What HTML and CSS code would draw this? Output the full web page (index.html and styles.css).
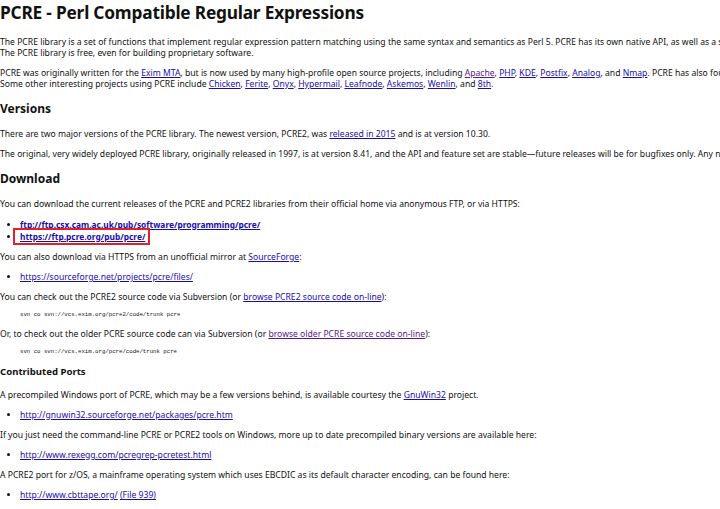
FILE: index.html
```html
<!DOCTYPE html>
<html lang="en">
<head>
  <meta charset="UTF-8" />
  <title>PCRE - Perl Compatible Regular Expressions</title>
  <link rel="stylesheet" href="styles.css">
</head>
<body>

<h1>PCRE - Perl Compatible Regular Expressions</h1>

<p>The PCRE library is a set of functions that implement regular expression pattern matching using the same syntax and semantics as Perl 5. PCRE has its own native API, as well as a set of wrapper functions that correspond to the POSIX regular expression API.<br>
The PCRE library is free, even for building proprietary software.</p>

<p>PCRE was originally written for the <a href="#">Exim MTA</a>, but is now used by many high-profile open source projects, including <a class="seen" href="#">Apache</a>, <a href="#">PHP</a>, <a href="#">KDE</a>, <a href="#">Postfix</a>, <a href="#">Analog</a>, and <a href="#">Nmap</a>. PCRE has also found its way into some well known commercial products, like Apple Safari.<br>
Some other interesting projects using PCRE include <a href="#">Chicken</a>, <a href="#">Ferite</a>, <a href="#">Onyx</a>, <a href="#">Hypermail</a>, <a href="#">Leafnode</a>, <a href="#">Askemos</a>, <a href="#">Wenlin</a>, and <a href="#">8th</a>.</p>

<h2>Versions</h2>

<p>There are two major versions of the PCRE library. The newest version, PCRE2, was <a href="#">released in 2015</a> and is at version 10.30.</p>

<p>The original, very widely deployed PCRE library, originally released in 1997, is at version 8.41, and the API and feature set are stable&mdash;future releases will be for bugfixes only. Any new features will be added to PCRE2, not to the original PCRE library.</p>

<h2>Download</h2>

<p>You can download the current releases of the PCRE and PCRE2 libraries from their official home via anonymous FTP, or via HTTPS:</p>

<ul class="mirrors">
  <li><a href="#">ftp://ftp.csx.cam.ac.uk/pub/software/programming/pcre/</a></li>
  <li><span class="mark"><a href="#">https://ftp.pcre.org/pub/pcre/</a></span></li>
</ul>

<p>You can also download via HTTPS from an unofficial mirror at <a href="#">SourceForge</a>:</p>

<ul>
  <li><a href="#">https://sourceforge.net/projects/pcre/files/</a></li>
</ul>

<p class="intro">You can check out the PCRE2 source code via Subversion (or <a href="#">browse PCRE2 source code on-line</a>):</p>

<pre>svn co svn://vcs.exim.org/pcre2/code/trunk pcre</pre>

<p class="intro">Or, to check out the older PCRE source code can via Subversion (or <a class="seen" href="#">browse older PCRE source code on-line</a>):</p>

<pre>svn co svn://vcs.exim.org/pcre/code/trunk pcre</pre>

<h3>Contributed Ports</h3>

<p>A precompiled Windows port of PCRE, which may be a few versions behind, is available courtesy the <a href="#">GnuWin32</a> project.</p>

<ul>
  <li><a href="#">http://gnuwin32.sourceforge.net/packages/pcre.htm</a></li>
</ul>

<p>If you just need the command-line PCRE or PCRE2 tools on Windows, more up to date precompiled binary versions are available here:</p>

<ul>
  <li><a href="#">http://www.rexegg.com/pcregrep-pcretest.html</a></li>
</ul>

<p>A PCRE2 port for z/OS, a mainframe operating system which uses EBCDIC as its default character encoding, can be found here:</p>

<ul>
  <li><a href="#">http://www.cbttape.org/</a> <a href="#">(File 939)</a></li>
</ul>

</body>
</html>
```

FILE: styles.css
```css
body {
  margin: 0;
  font-family: "Noto Sans", sans-serif;
  font-size: 8.6px;
  line-height: 11px;
  color: #111;
  background: #fff;
  white-space: nowrap;
  overflow: hidden;
}

h1 {
  margin: 0 0 11px;
  font-size: 17.3px;
  letter-spacing: -0.2px;
  line-height: 26px;
}

h2 {
  margin: 10px 0 12px;
  font-size: 12px;
  line-height: 17px;
}

h3 {
  margin: 7px 0 11px;
  font-size: 9.6px;
  line-height: 15px;
}

p {
  margin: 9px 0;
}

p.intro {
  margin-bottom: 7px;
}

a {
  color: #1a0dab;
}

a.seen {
  color: #551a8b;
}

ul {
  margin: 9px 0;
  padding-left: 20px;
}

.mirrors li {
  font-size: 8.4px;
  line-height: 12px;
  font-weight: bold;
}

.mark {
  margin-left: -7px;
  padding: 1px 3px 1px 5px;
  border: 2px solid #e0202a;
}

pre {
  margin: 7px 0 7px 20px;
  font-family: "Liberation Mono", monospace;
  font-size: 5.7px;
  line-height: 10px;
}
```
